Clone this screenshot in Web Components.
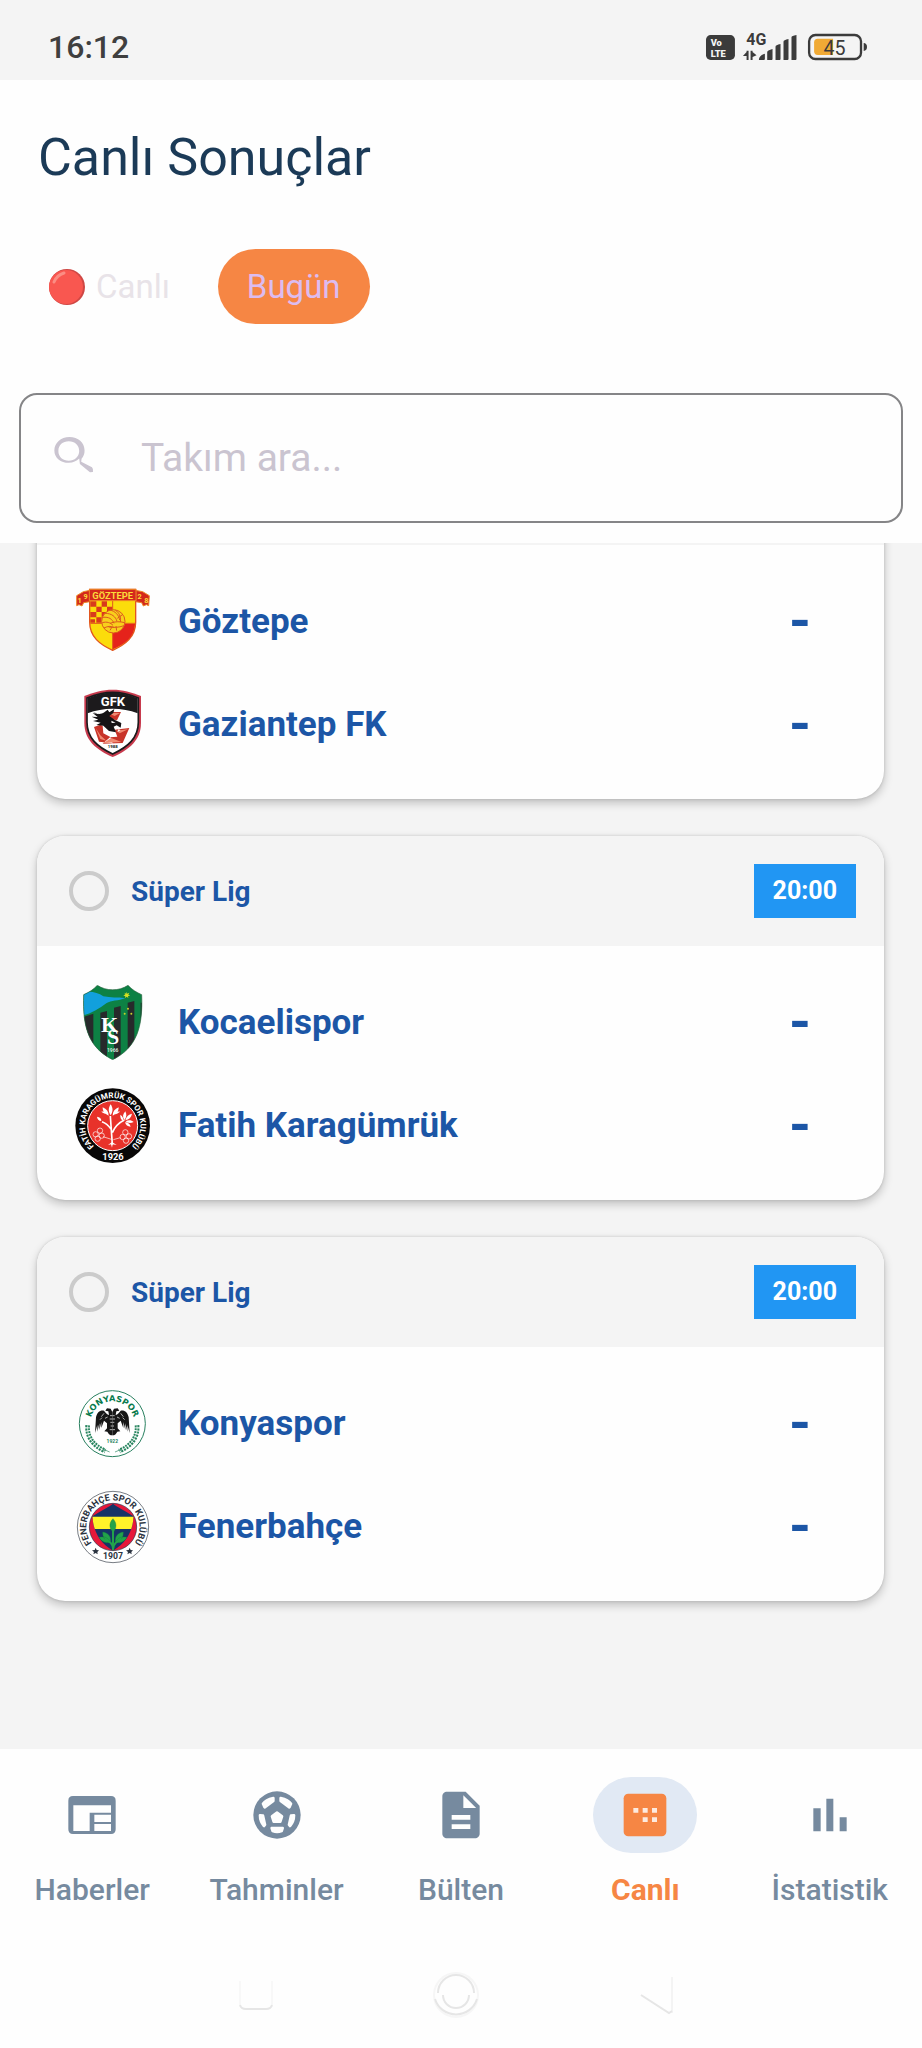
<!DOCTYPE html>
<html lang="tr">
<head>
<meta charset="utf-8">
<meta name="viewport" content="width=device-width, initial-scale=1">
<title>Canlı Sonuçlar</title>
<style>
    body {
        margin: 0;
        height: 100vh;
        display: flex;
        flex-direction: column;
        font-family: Roboto, "Noto Sans", sans-serif;
        background-color: #fefefe;
        color: #1c56a6;
    }
</style>
</head>
<body>
    <status-bar></status-bar>
    <page-header>
        Canlı Sonuçlar
        <filter-chip slot="filters" live>Canlı</filter-chip>
        <filter-chip slot="filters" active>Bugün</filter-chip>
        <team-search slot="search"></team-search>
    </page-header>
    <match-list>
        <match-card>
            <team-row crest="goztepe">Göztepe</team-row>
            <team-row crest="gaziantep">Gaziantep FK</team-row>
        </match-card>
        <match-card league="Süper Lig" time="20:00">
            <team-row crest="kocaelispor">Kocaelispor</team-row>
            <team-row crest="karagumruk">Fatih Karagümrük</team-row>
        </match-card>
        <match-card league="Süper Lig" time="20:00">
            <team-row crest="konyaspor">Konyaspor</team-row>
            <team-row crest="fenerbahce">Fenerbahçe</team-row>
        </match-card>
    </match-list>
    <tab-bar>
        <tab-item icon="news">Haberler</tab-item>
        <tab-item icon="ball">Tahminler</tab-item>
        <tab-item icon="doc">Bülten</tab-item>
        <tab-item icon="score" active>Canlı</tab-item>
        <tab-item icon="stats">İstatistik</tab-item>
    </tab-bar>
    <system-nav></system-nav>

<script>
// club crests, all drawn in a 225 x 225 box
const crests = {
    goztepe: `
        <svg viewBox="75 72 225 225">
            <path d="M80 107l20-12 20-4v34l-19 3-5 10-9-4-7 3zM298 107l-20-12-22-4v34l19 3 5 10 9-4 7 3z" fill="#d3281c" stroke="#ee8a26" stroke-width="3"/>
            <path d="M119 88h138v98c0 45-31 68-69 85-38-17-69-40-69-85z" fill="#fbdc0b" stroke="#e2561f" stroke-width="4"/>
            <path d="M188 192h67c-2 40-30 60-67 76z" fill="#e5231b"/>
            <g fill="#d83a1c">
                <path d="M121 124h18v16h-18zM155 124h16v16h-16zM139 140h16v16h-16zM171 140h16v16h-16zM121 156h18v16h-18zM155 156h16v16h-16zM139 172h16v16h-16zM121 178h14v10h-14z"/>
            </g>
            <path d="M188 122v148M121 190h134" stroke="#e2561f" stroke-width="3"/>
            <circle cx="190" cy="184" r="35" fill="#f8cf1c" stroke="#dc5a1d" stroke-width="3"/>
            <path d="M158 172c20-2 28 5 34 18M165 160c20 0 32 10 36 24M180 150c16 4 26 14 29 30M196 150c10 8 18 18 15 36M157 188c14-4 24 0 32 8M162 204c12-6 20-6 30-2M180 190c14-6 30-6 44-2M176 201c14 2 30 2 46-4M180 211l6-10M200 212l-2-14M216 165l-14 10" fill="none" stroke="#dc5a1d" stroke-width="3"/>
            <path d="M118 88h140v34H118z" fill="#d3281c" stroke="#ee8a26" stroke-width="3"/>
            <g fill="#fbdc3b" font-weight="700" text-anchor="middle">
                <text x="188" y="117" font-size="28">GÖZTEPE</text>
                <text x="89" y="129" font-size="22">1</text>
                <text x="107" y="118" font-size="22">9</text>
                <text x="269" y="118" font-size="22">2</text>
                <text x="289" y="129" font-size="22">8</text>
            </g>
        </svg>`,
    gaziantep: `
        <svg viewBox="75 381 225 225">
            <path d="M188 389c30 0 57 8 85 19v80c0 52-35 81-85 103-50-22-85-51-85-103v-80c28-11 55-19 85-19z" fill="#c73a4d"/>
            <path d="M188 397c27 0 51 6 77 17v73c0 47-31 74-77 95-46-21-77-48-77-95v-73c26-11 50-17 77-17z" fill="#fff" stroke="#1c1a1c" stroke-width="5"/>
            <path d="M188 398c27 0 50 6 75 17v45c-46-18-104-18-150 0v-45c25-11 48-17 75-17z" fill="#1c1a1c"/>
            <path d="M166 456h47l-12 25-34-8zM151 494l-19 7 15 44 41 5-7-19-21-11-2-22zM194 509l44-5-20 45-60 2 22-19 22-2z" fill="#c83429"/>
            <path d="M171 458l39 1-16 9zM137 504l14 33 18 5-18-16zM199 512l35-4-25 12zM160 549l24-15 30 12z" fill="#f08a72"/>
            <path d="M128 455c14 9 25 8 35 2l10-8 5 8 15-10-3 12-12 9 17 12 19 9-2 14-12-7-9 4 7 17-21-4-17-16-21-2 13-7-23-5 16-4-20-9 18 1-15-12 18 4z" fill="#161416"/>
            <path d="M184 482l13 6-12 1zM205 508l7 2-9 6z" fill="#fff"/>
            <text x="189" y="439" font-size="39" font-weight="700" fill="#fff" text-anchor="middle">GFK</text>
            <text x="188" y="564" font-size="13" font-weight="700" fill="#222" text-anchor="middle">1988</text>
        </svg>`,
    kocaelispor: `
        <svg viewBox="165 492 225 225">
            <defs><clipPath id="shield"><path d="M232 493c27 18 65 18 92 0 12 13 25 21 41 28 4 98-15 159-87 195-72-36-91-97-87-195 16-7 29-15 41-28z"/></clipPath></defs>
            <g clip-path="url(#shield)">
                <path d="M165 490h225v230H165z" fill="#0d8144"/>
                <path d="M190 588l30-10v130h-30zM241 575l20-5v150h-20zM282 560l20-5v150l-20 14zM323 545l20-5v150h-20zM362 545h12v100h-12z" fill="#272a2b"/>
                <path d="M188 514c25-4 45 0 62 12 22 5 43 2 66 6-21 7-43 7-56 14-22 17-47 31-72 38z" fill="#12a0dc"/>
                <path d="M320 512l2 6 6-3-3 6 6 3-7 1 1 6-5-4-5 4 1-6-6-1 6-4-3-5 6 3z" fill="#d9e021"/>
                <g fill="#c8d42b"><circle cx="324" cy="563" r="3"/><circle cx="314" cy="578" r="3"/><circle cx="334" cy="578" r="3"/></g>
            </g>
            <path d="M232 493c27 18 65 18 92 0 12 13 25 21 41 28 4 98-15 159-87 195-72-36-91-97-87-195 16-7 29-15 41-28z" fill="none" stroke="#27633e" stroke-width="2"/>
            <text x="243 261" y="634 668" font-size="66" font-family="Liberation Serif, serif" font-weight="700" fill="#fff">KS</text>
            <text x="278" y="692" font-size="15" fill="#d5e5db" text-anchor="middle">1966</text>
        </svg>`,
    karagumruk: `
        <svg viewBox="165 801 225 225">
            <defs><path id="ring" d="M278 997A83 83 0 0 1 278 831A83 83 0 0 1 278 997"/></defs>
            <circle cx="278" cy="914" r="112" fill="#080707"/>
            <circle cx="278" cy="914" r="75" fill="#e8322a" stroke="#fff" stroke-width="3"/>
            <g fill="none" stroke="#fff" stroke-width="5">
                <path d="M271 885l6 86M277 935c8-20 20-30 36-38M273 924c-8-11-16-18-27-22" />
                <g stroke-width="2">
                    <circle cx="240" cy="929" r="8"/><circle cx="227" cy="940" r="8"/><circle cx="245" cy="944" r="8"/><circle cx="233" cy="953" r="8"/>
                    <circle cx="316" cy="934" r="8"/><circle cx="308" cy="948" r="8"/><circle cx="327" cy="946" r="8"/><circle cx="318" cy="959" r="8"/>
                    <path d="M249 947l25 8M280 956l21-6"/>
                </g>
            </g>
            <g fill="#fff">
                <path d="M272 883c-8-13-7-22 0-33 7 11 8 20 0 33zM266 884c-13-6-18-13-18-25 12 5 18 13 18 25zM278 884c0-12 6-20 18-25 0 12-5 19-18 25zM263 880c-6-1-14-4-19-8 9-1 15 2 19 8zM281 880c4-6 10-9 19-8-5 5-12 8-19 8z"/>
                <path d="M313 897c-6-9-5-17 3-26 5 10 4 18-3 26zM316 898c3-12 10-18 20-20-2 11-9 18-20 20zM317 901c9-5 17-4 24 2-9 4-17 4-24-2zM315 904c9 0 15 5 17 13-9 0-15-5-17-13zM309 899c-6-4-9-9-8-18 7 5 10 11 8 18z"/>
                <path d="M244 900c-8-1-12-5-13-13 8 1 13 5 13 13zM264 972l12-9 14 9-12-2-2 10-3-10z"/>
            </g>
            <g fill="#fff" font-weight="700" text-anchor="middle">
                <text font-size="24"><textPath href="#ring" startOffset="50%">FATİH KARAGÜMRÜK SPOR KULÜBÜ</textPath></text>
                <text x="279" y="1016" font-size="28">1926</text>
            </g>
        </svg>`,
    konyaspor: `
        <svg viewBox="45 45 225 225">
            <defs>
                <path id="ring" d="M157 225A67 67 0 0 1 157 91A67 67 0 0 1 157 225"/>
                <g id="half">
                    <path d="M157 123l5-10 11-1 5 7-9 2-2 11c6-1 10-7 15-13 13-2 21 6 24 20l3 47-7-24v20l-6-25v20l-6-24v18l-8-22-9 8v15l8 9-9 1-5 8-5 3h-5z" fill="#171717"/>
                    <path d="M157 134h7M157 144h8M157 154h6M157 165h5M157 176h8M182 127l8 10M188 140l6 6M171 138l8 4" stroke="#fff" stroke-width="2"/>
                    <path d="M231 163c3 31-13 60-53 77" fill="none" stroke="#28855f" stroke-width="14" stroke-dasharray="6 3"/>
                    <path d="M231 163c3 31-13 60-53 77" fill="none" stroke="#fff" stroke-width="2"/>
                    <path d="M186 234l-21 9M184 240l-8-4" stroke="#28855f" stroke-width="2"/>
                </g>
            </defs>
            <circle cx="157" cy="158" r="99" fill="#fff" stroke="#28805f" stroke-width="3"/>
            <text font-size="25" font-family="DejaVu Sans, sans-serif" font-weight="700" fill="#087a4c" text-anchor="middle"><textPath href="#ring" startOffset="50%">KONYASPOR</textPath></text>
            <use href="#half"/>
            <use href="#half" transform="matrix(-1 0 0 1 314 0)"/>
            <text x="157" y="217" font-size="15" fill="#28855f" text-anchor="middle">1922</text>
        </svg>`,
    fenerbahce: `
        <svg viewBox="45 354 225 225">
            <defs>
                <path id="ring" d="M159 548A80 80 0 0 1 159 388A80 80 0 0 1 159 548"/>
                <clipPath id="core"><path d="M159 398c12 10 33 19 62 38-3 42-20 79-62 103-42-24-59-61-62-103 29-19 50-28 62-38z"/></clipPath>
            </defs>
            <circle cx="159" cy="468" r="107" fill="#fff" stroke="#333b46" stroke-width="2"/>
            <circle cx="159" cy="468" r="71" fill="#e6183a" stroke="#2b3145" stroke-width="2"/>
            <g clip-path="url(#core)">
                <path d="M90 395h140v150H90z" fill="#163466"/>
                <path d="M90 437h140v37H90z" fill="#fff32a"/>
            </g>
            <g fill="#22a34a" stroke="#0f763a">
                <path d="M159 443c12 13 11 28 1 41-13-11-14-28-1-41zM152 512c-17-2-24-10-24-29 16 2 25 12 24 29zM166 512c-1-17 8-27 24-29 0 19-7 27-24 29zM151 513c-14 5-25 1-34-14 15-4 28 1 34 14zM167 513c6-13 19-18 34-14-9 15-20 19-34 14z"/>
                <path d="M159 480v58M159 532c-1-14-11-22-25-25M160 532c1-14 11-22 25-25" fill="none" stroke="#22a34a" stroke-width="6"/>
            </g>
            <g fill="#2b3340" text-anchor="middle">
                <text font-size="27"><textPath href="#ring" startOffset="50%">FENERBAHÇE SPOR KULÜBÜ</textPath></text>
                <text x="159" y="564" font-size="26">1907</text>
                <path d="M107 530l3 7 7 1-5 5 1 7-6-4-7 4 2-7-6-5 8-1zM209 530l3 7 7 1-5 5 1 7-6-4-7 4 2-7-6-5 8-1z"/>
            </g>
        </svg>`
}

const icons = {
    news: `
        <svg viewBox="190 141 168 168">
            <path fill-rule="evenodd" d="M217 168h114q14 0 14 14v86q0 14-14 14H217q-14 0-14-14v-86q0-14 14-14zM218 196v77h49v-55h64v-22zM281 224v22h50v-22zM281 252v21h50v-21z"/>
        </svg>`,
    ball: `
        <svg viewBox="743 141 168 168">
            <circle cx="827" cy="225" r="71"/>
            <g fill="#fefefe" stroke="#fefefe" stroke-width="8" stroke-linejoin="round">
                <path d="M827 218l15 11-5 16h-20l-5-16zM811 264h33l-3 9q-14 5-27 0zM785 191q8-12 31-17v9l-26 19zM869 191q-8-12-31-17v9l26 19zM776 226l9 1 6 27-3 4q-12-13-12-32zM878 226l-9 1-6 27 3 4q12-13 12-32z"/>
            </g>
        </svg>`,
    doc: `
        <svg viewBox="0 0 24 24">
            <path d="M14 2H6c-1.100 0-2 .9-2 2v16c0 1.100.9 2 2 2h12c1.100 0 2-.9 2-2V8l-6-6zm2 16H8v-2h8v2zm0-4H8v-2h8v2zm-3-5V3.500L18.500 9H13z"/>
        </svg>`,
    score: `
        <svg viewBox="466 141 168 168">
            <rect x="486" y="161" width="128" height="128" rx="14"/>
            <path fill="#fdeadf" d="M515 204h15v14h-15zM543 204h15v14h-15zM571 204h15v14h-15zM543 232h15v14h-15zM571 232h15v14h-15z"/>
        </svg>`,
    stats: `
        <svg viewBox="1020 141 168 168">
            <path d="M1054 205h22v69h-22zM1093 176h21v98h-21zM1133 232h21v42h-21z"/>
        </svg>`
}

const attach = (element, html) => {
    const root = element.attachShadow({ mode: 'open' })
    root.innerHTML = html
    return root
}

class StatusBar extends HTMLElement {
    constructor () {
        super()
        attach(this, `
            <style>
                :host {
                    display: flex;
                    flex: none;
                    align-items: center;
                    justify-content: space-between;
                    box-sizing: border-box;
                    height: 80px;
                    padding: 14px 54px 0 48px;
                    background-color: #f4f4f4;
                    color: #3f3f3f;
                    font-size: 32px;
                    font-weight: 500;
                }

                svg {
                    width: 163px;
                    height: 32px;
                }
            </style>
            <span>16:12</span>
            <svg viewBox="75 90 490 96" fill="#3b3b3b">
                <rect x="78" y="102" width="87" height="75" rx="14"/>
                <g fill="#f4f4f4" font-weight="900" font-size="28">
                    <text x="92" y="134">Vo</text>
                    <text x="92" y="168">LTE</text>
                </g>
                <text x="199" y="132" font-size="48" font-weight="700">4G</text>
                <path d="M200 149h6v28h-6zM189 165l11-12v12zM212 149h6v28h-6zM218 153l12 10-12 5z"/>
                <path d="M237 177q0-14 18-19v16q0 3-3 3zM262 153q0-5 16-9v30q0 3-3 3h-13zM287 137q0-5 15-8v45q0 3-3 3h-12zM311 122q0-5 15-8v60q0 3-3 3h-12zM335 109q0-5 15-7v72q0 3-3 3h-12z"/>
                <rect x="388" y="102" width="156" height="72" rx="19" fill="none" stroke="#3b3b3b" stroke-width="7"/>
                <path d="M414 113h46v49h-46q-11 0-11-11v-27q0-11 11-11z" fill="#f0aa35"/>
                <path d="M552 126q10 1 10 12t-10 12z"/>
                <text x="431" y="161" font-size="59" font-weight="400">45</text>
            </svg>
        `)
    }
}
customElements.define('status-bar', StatusBar)

class PageHeader extends HTMLElement {
    constructor () {
        super()
        attach(this, `
            <style>
                :host {
                    display: block;
                    flex: none;
                    padding: 46px 19px 20px;
                }

                h1 {
                    margin: 0 19px;
                    font-size: 52px;
                    line-height: 64px;
                    font-weight: 400;
                    color: #1b3a57;
                }

                .filters {
                    display: flex;
                    gap: 19px;
                    margin: 59px 0 69px;
                }
            </style>
            <h1><slot></slot></h1>
            <div class="filters"><slot name="filters"></slot></div>
            <slot name="search"></slot>
        `)
    }
}
customElements.define('page-header', PageHeader)

class FilterChip extends HTMLElement {
    constructor () {
        super()
        attach(this, `
            <style>
                :host {
                    display: block;
                }

                button {
                    display: flex;
                    align-items: center;
                    gap: 10px;
                    height: 75px;
                    padding: 0 29px;
                    border: none;
                    border-radius: 38px;
                    background: none;
                    font: inherit;
                    font-size: 33px;
                    color: #e8e3e8;
                }

                svg {
                    display: none;
                    width: 38px;
                    height: 38px;
                }

                :host([live]) svg {
                    display: block;
                }

                :host([active]) button {
                    background-color: #f68644;
                    color: #dcbcf0;
                }
            </style>
            <button type="button">
                <svg viewBox="0 0 38 38">
                    <circle cx="19" cy="19" r="18" fill="#cf4744"/>
                    <circle cx="18" cy="19" r="17" fill="#f95750"/>
                    <path d="M6 14q3-7 10-9" fill="none" stroke="#fb8d83" stroke-width="3" stroke-linecap="round"/>
                </svg>
                <slot></slot>
            </button>
        `)
    }
}
customElements.define('filter-chip', FilterChip)

class TeamSearch extends HTMLElement {
    constructor () {
        super()
        attach(this, `
            <style>
                :host {
                    display: block;
                }

                label {
                    display: flex;
                    align-items: center;
                    gap: 46px;
                    box-sizing: border-box;
                    height: 130px;
                    padding: 0 32px;
                    border: 2px solid #858587;
                    border-radius: 18px;
                }

                svg {
                    flex: none;
                    width: 42px;
                    height: 42px;
                }

                input {
                    flex: 1;
                    min-width: 0;
                    padding: 0;
                    border: none;
                    outline: none;
                    background: none;
                    font: inherit;
                    font-size: 39px;
                    color: #1b3a57;
                }

                input::placeholder {
                    color: #cac4d0;
                    opacity: 1;
                }
            </style>
            <label>
                <svg viewBox="160 201 125 125" fill="#cac4d0">
                    <path fill-rule="evenodd" d="M209 201c26 0 45 17 45 40 0 10-3 18-9 25l-1 9 32 16q4 4 3 14l-9 1-30-25-2-16c-8 7-18 13-31 13-24 0-43-15-43-37s19-40 45-40zM207 214c-18 0-31 11-31 29s14 29 31 29 31-12 31-29-13-29-31-29z"/>
                </svg>
                <input type="search" placeholder="Takım ara..." aria-label="Takım ara">
            </label>
        `)
    }
}
customElements.define('team-search', TeamSearch)

class MatchList extends HTMLElement {
    constructor () {
        super()
        // the list stays at its end, older matches run out at the top
        attach(this, `
            <style>
                :host {
                    display: flex;
                    flex: 1 1 0;
                    flex-direction: column;
                    justify-content: flex-end;
                    gap: 37px;
                    min-height: 0;
                    padding: 0 38px 148px 37px;
                    overflow: hidden;
                    background-color: #f4f4f4;
                }
            </style>
            <slot></slot>
        `)
    }
}
customElements.define('match-list', MatchList)

class MatchCard extends HTMLElement {
    constructor () {
        super()
        const root = attach(this, `
            <style>
                :host {
                    display: block;
                    flex: none;
                    border-radius: 28px;
                    overflow: hidden;
                    background-color: #fefefe;
                    box-shadow: 0 4px 10px rgba(0, 0, 0, .22), 0 0 3px rgba(0, 0, 0, .14);
                }

                header {
                    display: flex;
                    align-items: center;
                    gap: 22px;
                    box-sizing: border-box;
                    height: 110px;
                    padding: 0 28px 0 32px;
                    background-color: #f4f4f4;
                    font-size: 28px;
                    font-weight: 700;
                }

                .state {
                    box-sizing: border-box;
                    width: 40px;
                    height: 40px;
                    border: 4px solid #cbcbcb;
                    border-radius: 50%;
                }

                time {
                    margin-left: auto;
                    padding: 0 19px;
                    background-color: #2196f3;
                    color: #fff;
                    font-size: 25px;
                    line-height: 54px;
                    font-weight: 700;
                }

                .teams {
                    display: flex;
                    flex-direction: column;
                    gap: 28px;
                    padding: 39px 38px 37px;
                }
            </style>
            <header></header>
            <div class="teams"><slot></slot></div>
        `)
        this.$header = root.querySelector('header')
    }

    connectedCallback() {
        const league = this.getAttribute('league')
        if (league) {
            this.$header.innerHTML = `
                <span class="state"></span>
                <span>${league}</span>
                <time>${this.getAttribute('time')}</time>
            `
        }
    }
}
customElements.define('match-card', MatchCard)

class TeamRow extends HTMLElement {
    constructor () {
        super()
        const root = attach(this, `
            <style>
                :host {
                    display: flex;
                    align-items: center;
                    gap: 28px;
                    height: 75px;
                    font-size: 35px;
                    font-weight: 700;
                }

                .crest, svg {
                    display: block;
                    width: 75px;
                    height: 75px;
                }

                .name {
                    flex: 1;
                }

                .score {
                    width: 92px;
                    text-align: center;
                    font-size: 56px;
                    line-height: 75px;
                    font-weight: 700;
                }
            </style>
            <span class="crest"></span>
            <span class="name"><slot></slot></span>
            <span class="score">-</span>
        `)
        this.$crest = root.querySelector('.crest')
    }

    connectedCallback() {
        this.$crest.innerHTML = crests[this.getAttribute('crest')]
    }
}
customElements.define('team-row', TeamRow)

class TabBar extends HTMLElement {
    constructor () {
        super()
        attach(this, `
            <style>
                :host {
                    display: block;
                    flex: none;
                    padding: 28px 0 35px;
                }

                nav {
                    display: grid;
                    grid-template-columns: repeat(5, 1fr);
                }
            </style>
            <nav><slot></slot></nav>
        `)
    }
}
customElements.define('tab-bar', TabBar)

class TabItem extends HTMLElement {
    constructor () {
        super()
        const root = attach(this, `
            <style>
                :host {
                    display: block;
                }

                a {
                    display: flex;
                    flex-direction: column;
                    align-items: center;
                    gap: 20px;
                    color: #768a9f;
                    font-size: 30px;
                    line-height: 34px;
                    font-weight: 500;
                    text-decoration: none;
                }

                .icon {
                    display: grid;
                    place-items: center;
                    width: 104px;
                    height: 76px;
                    border-radius: 38px;
                }

                svg {
                    width: 56px;
                    height: 56px;
                    fill: currentColor;
                }

                :host([active]) a {
                    color: #f68644;
                    font-weight: 700;
                }

                :host([active]) .icon {
                    background-color: #e1e9f4;
                }
            </style>
            <a href="#"><span class="icon"></span><slot></slot></a>
        `)
        this.$icon = root.querySelector('.icon')
    }

    connectedCallback() {
        this.$icon.innerHTML = icons[this.getAttribute('icon')]
    }
}
customElements.define('tab-item', TabItem)

class SystemNav extends HTMLElement {
    constructor () {
        super()
        attach(this, `
            <style>
                :host {
                    display: flex;
                    flex: none;
                    align-items: center;
                    justify-content: center;
                    gap: 144px;
                    height: 106px;
                    padding-right: 10px;
                }

                button {
                    padding: 0;
                    border: none;
                    background: none;
                }

                svg {
                    display: block;
                    width: 56px;
                    height: 56px;
                    fill: none;
                    stroke-width: 2;
                    stroke: #e6e6e6;
                }
            </style>
            <button type="button" aria-label="Son uygulamalar">
                <svg viewBox="0 0 56 56"><path d="M12 14v24M44 14v24" stroke="#f8f8f8"/><path d="M12 38q1 4 6 4h20q5 0 6-4"/></svg>
            </button>
            <button type="button" aria-label="Ana ekran">
                <svg viewBox="0 0 56 56"><circle cx="28" cy="28" r="22" stroke="#f6f6f6"/><path d="M10 26a18 18 0 0 1 36 0M7 32a22 22 0 0 0 42 0M15 28a13 13 0 0 0 26 0"/></svg>
            </button>
            <button type="button" aria-label="Geri">
                <svg viewBox="0 0 56 56"><path d="M44 10v36" stroke="#f4f4f4"/><path d="M13 28l28 18 3-2"/></svg>
            </button>
        `)
    }
}
customElements.define('system-nav', SystemNav)
</script>
</body>
</html>
